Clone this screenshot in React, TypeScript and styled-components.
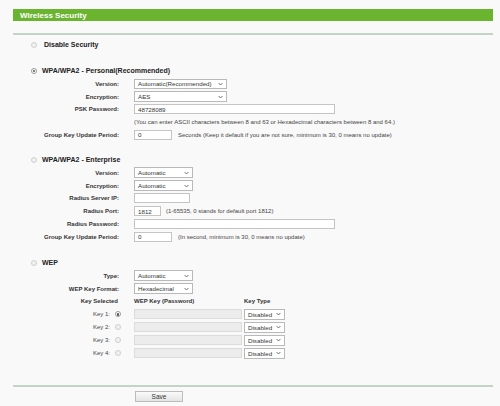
import React from "react";
import styled, { createGlobalStyle } from "styled-components";

const GlobalStyle = createGlobalStyle`
  html, body { margin: 0; padding: 0; background: #f9f9f9; }
  body { font-family: "Liberation Sans", Arial, sans-serif; color: #333; }
  * { box-sizing: border-box; }
`;

const Page = styled.div`
  width: 480px;
  margin-left: 13px;
  padding-top: 9px;
`;

const HeaderBar = styled.div`
  height: 12px;
  background: #6ab42f;
  color: #fff;
  font-weight: bold;
  font-size: 8px;
  padding-left: 7px;
  display: flex;
  align-items: center;
`;

const Divider = styled.div<{ $top: number }>`
  height: 2px;
  background: #c3d3c6;
  margin-top: ${(p) => p.$top}px;
`;

const Section = styled.div<{ $top: number }>`
  margin-top: ${(p) => p.$top}px;
`;

const TitleRow = styled.label<{ $gap?: number }>`
  height: 12.8px;
  display: flex;
  align-items: center;
  gap: ${(p) => p.$gap ?? 5}px;
  padding-left: 18px;
  font-size: 7px;
  font-weight: bold;
  color: #222;
`;

const Row = styled.div`
  height: 12.8px;
  display: grid;
  grid-template-columns: 106px 1fr;
  column-gap: 15px;
  align-items: center;
`;

const Label = styled.div`
  text-align: right;
  font-size: 6px;
  font-weight: bold;
  color: #333;
  white-space: nowrap;
`;

const Controls = styled.div<{ $gap?: number }>`
  display: flex;
  align-items: center;
  gap: ${(p) => p.$gap ?? 6}px;
`;

const Note = styled.span`
  font-size: 6px;
  color: #444;
  white-space: nowrap;
`;

const TextInput = styled.div<{ $w: number; $disabled?: boolean }>`
  width: ${(p) => p.$w}px;
  height: 10px;
  border: 1px solid ${(p) => (p.$disabled ? "#dcdcdc" : "#c4c4c4")};
  background: ${(p) => (p.$disabled ? "#ececec" : "#fff")};
  font-size: 6.2px;
  color: #333;
  padding-left: 3px;
  display: flex;
  align-items: center;
`;

const SelectBox = styled.div<{ $w: number }>`
  width: ${(p) => p.$w}px;
  height: 10.5px;
  border: 1px solid #b9b9b9;
  background: #fff;
  font-size: 6.2px;
  color: #333;
  padding: 0 3px 0 3px;
  display: flex;
  align-items: center;
  justify-content: space-between;
  white-space: nowrap;
`;

const RadioDot = styled.span<{ $checked?: boolean }>`
  width: 6px;
  height: 6px;
  border-radius: 50%;
  border: 1px solid ${(p) => (p.$checked ? "#9a9a9a" : "#cfcfcf")};
  background: ${(p) => (p.$checked ? "#fff" : "#f1f1f1")};
  display: inline-flex;
  align-items: center;
  justify-content: center;
  flex: none;
  &::after {
    content: "";
    width: 2.4px;
    height: 2.4px;
    border-radius: 50%;
    background: ${(p) => (p.$checked ? "#555" : "transparent")};
  }
`;

const KeyGrid = styled.div`
  height: 13px;
  display: grid;
  grid-template-columns: 121px 110px 41px;
  align-items: center;
`;

const KeyHead = styled.div<{ $pad?: number }>`
  font-size: 6px;
  font-weight: bold;
  color: #333;
  white-space: nowrap;
  text-align: ${(p) => (p.$pad !== undefined ? "right" : "left")};
  padding-right: ${(p) => p.$pad ?? 0}px;
`;

const KeyLabel = styled.div`
  display: flex;
  justify-content: flex-end;
  align-items: center;
  gap: 5px;
  padding-right: 13px;
  font-size: 6px;
  color: #444;
`;

const Footer = styled.div`
  margin-top: 4px;
  padding-left: 122px;
`;

const SaveButton = styled.button`
  width: 48px;
  height: 11px;
  padding: 0;
  border: 1px solid #bcbcbc;
  background: linear-gradient(#fafafa, #e4e4e4);
  font-family: "Liberation Sans", Arial, sans-serif;
  font-size: 6.5px;
  color: #333;
  display: flex;
  align-items: center;
  justify-content: center;
`;

const Chevron = () => (
  <svg width="5" height="4" viewBox="0 0 5 4" style={{ flex: "none" }}>
    <path d="M0.6 1 L2.5 3 L4.4 1" fill="none" stroke="#555" strokeWidth="0.8" />
  </svg>
);

const Select = ({ w, value }: { w: number; value: string }) => (
  <SelectBox $w={w}>
    <span>{value}</span>
    <Chevron />
  </SelectBox>
);

const Field = ({ label, children, gap }: { label: string; children?: React.ReactNode; gap?: number }) => (
  <Row>
    <Label>{label}</Label>
    <Controls $gap={gap}>{children}</Controls>
  </Row>
);

export default function App() {
  return (
    <>
      <GlobalStyle />
      <Page>
        <HeaderBar>Wireless Security</HeaderBar>
        <Divider $top={12} />

        <Section $top={3.6}>
          <TitleRow $gap={7}>
            <RadioDot />
            <span>Disable Security</span>
          </TitleRow>
        </Section>

        <Section $top={13.2}>
          <TitleRow>
            <RadioDot $checked />
            <span>WPA/WPA2 - Personal(Recommended)</span>
          </TitleRow>
          <Field label="Version:">
            <Select w={93} value="Automatic(Recommended)" />
          </Field>
          <Field label="Encryption:">
            <Select w={93} value="AES" />
          </Field>
          <Field label="PSK Password:">
            <TextInput $w={201}>48728089</TextInput>
          </Field>
          <Field label="">
            <Note>(You can enter ASCII characters between 8 and 63 or Hexadecimal characters between 8 and 64.)</Note>
          </Field>
          <Field label="Group Key Update Period:">
            <TextInput $w={38}>0</TextInput>
            <Note>Seconds (Keep it default if you are not sure, minimum is 30, 0 means no update)</Note>
          </Field>
        </Section>

        <Section $top={12.2}>
          <TitleRow>
            <RadioDot />
            <span>WPA/WPA2 - Enterprise</span>
          </TitleRow>
          <Field label="Version:">
            <Select w={59} value="Automatic" />
          </Field>
          <Field label="Encryption:">
            <Select w={59} value="Automatic" />
          </Field>
          <Field label="Radius Server IP:">
            <TextInput $w={56} />
          </Field>
          <Field label="Radius Port:" gap={5}>
            <TextInput $w={27}>1812</TextInput>
            <Note>(1-65535, 0 stands for default port 1812)</Note>
          </Field>
          <Field label="Radius Password:">
            <TextInput $w={201} />
          </Field>
          <Field label="Group Key Update Period:">
            <TextInput $w={38}>0</TextInput>
            <Note>(In second, minimum is 30, 0 means no update)</Note>
          </Field>
        </Section>

        <Section $top={13.4}>
          <TitleRow>
            <RadioDot />
            <span>WEP</span>
          </TitleRow>
          <Field label="Type:">
            <Select w={59} value="Automatic" />
          </Field>
          <Field label="WEP Key Format:">
            <Select w={59} value="Hexadecimal" />
          </Field>
          <KeyGrid>
            <KeyHead $pad={16}>Key Selected</KeyHead>
            <KeyHead>WEP Key (Password)</KeyHead>
            <KeyHead>Key Type</KeyHead>
          </KeyGrid>
          {[1, 2, 3, 4].map((n) => (
            <KeyGrid key={n}>
              <KeyLabel>
                <span>Key {n}:</span>
                <RadioDot $checked={n === 1} />
              </KeyLabel>
              <TextInput $w={108} $disabled />
              <Select w={41} value="Disabled" />
            </KeyGrid>
          ))}
        </Section>

        <Divider $top={25.5} />
        <Footer>
          <SaveButton>Save</SaveButton>
        </Footer>
      </Page>
    </>
  );
}
